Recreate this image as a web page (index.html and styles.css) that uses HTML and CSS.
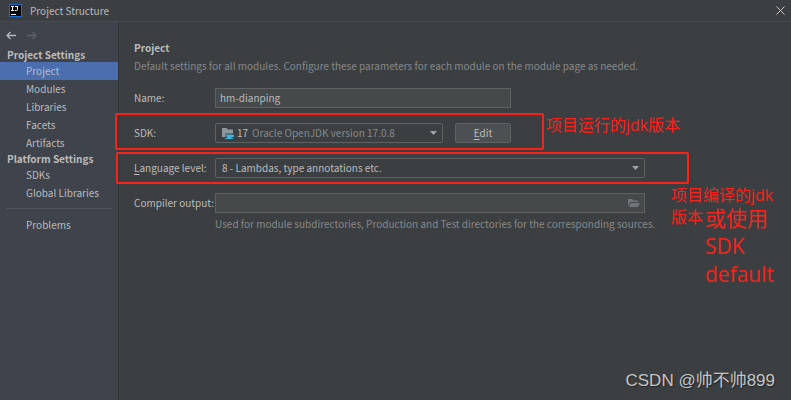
FILE: index.html
```html
<!DOCTYPE html>
<html lang="en">
<head>
    <meta charset="UTF-8">
    <meta name="viewport" content="width=device-width, initial-scale=1.0">
    <title>Project Structure</title>
    <link rel="stylesheet" href="styles.css">
</head>
<body>
    <header class="titlebar">
        <svg class="app-icon" viewBox="0 0 13 13" aria-hidden="true">
            <rect width="13" height="13" fill="#1b6fd0"/>
            <rect x="1" y="1" width="11" height="11" fill="#05070c"/>
            <path d="M2 2.500h3M3.500 2.500v4M2 6.500h3M6 2.500h3M8.500 2.500v3q0 1-1 1H6M2 10.500h5" fill="none" stroke="#fff"/>
        </svg>
        <span class="window-title">Project Structure</span>
        <button class="close" type="button" aria-label="Close">
            <svg viewBox="0 0 9 9"><path d="M.5.5l8 8M8.500.5l-8 8" fill="none" stroke="#c8cacb"/></svg>
        </button>
    </header>

    <div class="window">
        <aside class="sidebar">
            <div class="history">
                <button type="button" aria-label="Back">
                    <svg viewBox="0 0 10 9"><path d="M10 4.500H1M4.500 1L1 4.500 4.500 8" fill="none" stroke="#b4b7ba" stroke-width="1.300"/></svg>
                </button>
                <button type="button" aria-label="Forward" disabled>
                    <svg viewBox="0 0 10 9"><path d="M0 4.500h9M5.500 1L9 4.500 5.500 8" fill="none" stroke="#5d6167" stroke-width="1.300"/></svg>
                </button>
            </div>
            <nav>
                <h2>Project Settings</h2>
                <a class="selected" href="#project">Project</a>
                <a href="#modules">Modules</a>
                <a href="#libraries">Libraries</a>
                <a href="#facets">Facets</a>
                <a href="#artifacts">Artifacts</a>
                <h2>Platform Settings</h2>
                <a href="#sdks">SDKs</a>
                <a href="#global">Global Libraries</a>
                <hr>
                <a href="#problems">Problems</a>
            </nav>
        </aside>

        <main class="content">
            <h1>Project</h1>
            <p class="hint">Default settings for all modules. Configure these parameters for each module on the module page as needed.</p>

            <form class="settings">
                <label for="name">Name:</label>
                <div class="row">
                    <input class="field name" id="name" type="text" value="hm-dianping">
                </div>

                <label for="sdk">SDK:</label>
                <div class="row">
                    <div class="combo sdk">
                        <svg class="jdk-icon" viewBox="0 0 12 12" aria-hidden="true">
                            <path d="M0 1h4.500l1.500 1.500h5V6.500H3.500V10H0z" fill="#8d989f"/>
                            <path d="M4 7.500h6.500v.5h1.500v2h-2l-1 1H5.500Q4 9.500 4 7.500zM3 11h8v1H3z" fill="#3fb4d8"/>
                        </svg>
                        <span class="version">17</span>
                        <select id="sdk"><option>Oracle OpenJDK version 17.0.8</option></select>
                        <svg class="arrow" viewBox="0 0 7 4" aria-hidden="true"><path d="M0 0h7L3.500 4z" fill="#a2a5a7"/></svg>
                    </div>
                    <button class="edit" type="button"><u>E</u>dit</button>
                </div>

                <label for="level"><u>L</u>anguage level:</label>
                <div class="row">
                    <div class="combo wide">
                        <select id="level"><option>8 - Lambdas, type annotations etc.</option></select>
                        <svg class="arrow" viewBox="0 0 7 4" aria-hidden="true"><path d="M0 0h7L3.500 4z" fill="#a2a5a7"/></svg>
                    </div>
                </div>

                <label for="output">Compiler output:</label>
                <div class="row">
                    <div class="field path wide">
                        <input id="output" type="text">
                        <button type="button" aria-label="Browse">
                            <svg viewBox="0 0 12 10"><path d="M0 8V1h4l1.500 1.500H10V4H2.500z" fill="#6f777b"/><path d="M3 5h9l-2 4H.8z" fill="#6f777b"/></svg>
                        </button>
                    </div>
                </div>
                <p class="hint note">Used for module subdirectories, Production and Test directories for the corresponding sources.</p>
            </form>
        </main>
    </div>

    <!-- annotations over the dialog -->
    <div class="mark mark-sdk"></div>
    <div class="mark mark-level"></div>
    <p class="remark remark-run" lang="zh">项目运行的jdk版本</p>
    <p class="remark remark-compile" lang="zh">项目编译的jdk<br>版本</p>
    <p class="remark remark-default" lang="zh">或使用<br>SDK<br>default</p>
    <p class="watermark" lang="zh">CSDN @帅不帅899</p>
</body>
</html>
```
FILE: styles.css
```css
* {
    margin: 0;
    padding: 0;
    box-sizing: border-box;
}

body {
    display: flex;
    flex-direction: column;
    position: relative;
    min-height: 100vh;
    background: #3c3f41;
    color: #bbbbbb;
    font-family: "Noto Sans CJK SC", "Noto Sans", sans-serif;
    font-size: 10px;
    line-height: 18px;
}

svg {
    display: block;
}

button,
input,
select {
    font: inherit;
    color: inherit;
    background: none;
    border: none;
    outline: none;
}

a {
    color: inherit;
    text-decoration: none;
}

h1,
h2 {
    font-size: 10px;
}

u {
    text-underline-offset: 2px;
}

.titlebar {
    display: flex;
    align-items: center;
    height: 22px;
    padding: 0 6px 0 9px;
    border-bottom: 1px solid #484b4d;
}

.app-icon {
    width: 13px;
    height: 13px;
}

.window-title {
    flex: 1;
    margin-left: 8px;
}

.close svg {
    width: 9px;
    height: 9px;
}

.window {
    display: flex;
    flex: 1;
}

.sidebar {
    width: 119px;
    background: #3e434c;
    border-right: 1px solid #333638;
}

.history {
    display: flex;
    gap: 11px;
    height: 26px;
    padding: 5px 6px;
}

.history svg {
    width: 10px;
    height: 9px;
}

.sidebar h2 {
    padding-left: 7px;
    line-height: 14px;
}

.sidebar a {
    display: block;
    padding-left: 26px;
}

.sidebar .selected {
    background: #4b6eaf;
}

.sidebar hr {
    height: 1px;
    margin: 6px 6px 7px;
    border: none;
    background: #50545b;
}

.content {
    flex: 1;
    padding: 17px 15px;
}

.hint {
    color: #85888a;
}

.settings {
    display: grid;
    grid-template-columns: 81px 1fr;
    align-items: center;
    margin-top: 5px;
    white-space: nowrap;
}

.row {
    display: flex;
    align-items: center;
    gap: 12px;
    height: 35px;
}

.field {
    height: 20px;
    background: #45494a;
    border: 1px solid #5e6162;
}

.name {
    width: 296px;
    padding: 0 4px;
}

.combo {
    display: flex;
    align-items: center;
    height: 20px;
    padding: 0 5px 0 6px;
    border: 1px solid #5e6162;
    border-radius: 2px;
}

.combo select {
    flex: 1;
    min-width: 0;
    appearance: none;
}

.sdk {
    width: 228px;
}

.sdk select {
    color: #85888a;
}

.wide {
    width: 430px;
}

.jdk-icon {
    width: 12px;
    height: 12px;
}

.version {
    margin: 0 4px 0 3px;
}

.arrow {
    width: 7px;
    height: 4px;
}

.edit {
    width: 56px;
    height: 20px;
    line-height: 18px;
    background: #4c5052;
    border: 1px solid #5e6162;
    border-radius: 2px;
}

.path {
    display: flex;
    align-items: center;
    padding: 0 4px;
}

.path input {
    flex: 1;
    min-width: 0;
}

.path svg {
    width: 12px;
    height: 10px;
}

.note {
    grid-column: 2;
    line-height: 8px;
}

.mark {
    position: absolute;
    border: 2px solid #f9221a;
    border-radius: 2px;
}

.mark-sdk {
    left: 115px;
    top: 113px;
    width: 429px;
    height: 37px;
}

.mark-level {
    left: 116px;
    top: 152px;
    width: 573px;
    height: 32px;
}

.remark {
    position: absolute;
    color: #f9221a;
    font-family: "Open Sans", "Noto Sans CJK SC", sans-serif;
    font-size: 16px;
    line-height: 22px;
}

.remark-run {
    left: 546px;
    top: 114px;
}

.remark-compile {
    left: 671px;
    top: 184px;
}

.remark-default {
    left: 705px;
    top: 204px;
    font-size: 21px;
    line-height: 28px;
}

.watermark {
    position: absolute;
    right: 16px;
    bottom: 8px;
    color: #c4c6c7;
    font-family: "Liberation Sans", "Noto Sans CJK SC", sans-serif;
    font-size: 17px;
    line-height: 22px;
    text-shadow: 1px 1px 1px #222425;
}
```
